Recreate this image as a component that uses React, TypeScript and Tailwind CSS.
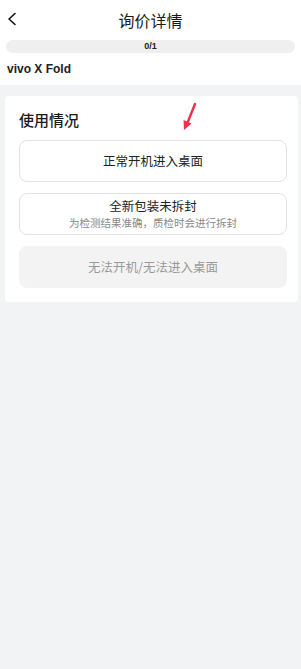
import React from "react";

export default function App() {
  const font = { fontFamily: '"Noto Sans CJK SC", "Noto Sans", sans-serif' };
  return (
    <div className="w-[301px] min-h-[669px] bg-[#f2f3f5] relative" style={font}>
      <div className="bg-white">
        <div className="relative h-[40px] flex items-center justify-center">
          <svg className="absolute left-[7px] top-[12px]" width="10" height="14" viewBox="0 0 10 14">
            <path d="M8 1.5 L2 7 L8 12.5" stroke="#111" strokeWidth="1.6" fill="none" strokeLinecap="round" strokeLinejoin="round" />
          </svg>
          <span className="text-[16px] text-[#1a1a1a]">询价详情</span>
        </div>
        <div className="px-[6px]">
          <div className="h-[13px] rounded-full bg-[#efefef] flex items-center justify-center">
            <span className="text-[9px] font-bold text-[#222] leading-none" style={{ fontFamily: '"Liberation Sans", sans-serif' }}>0/1</span>
          </div>
        </div>
        <div className="px-[7px] h-[32px] flex items-center">
          <span className="text-[12px] font-bold text-[#222]" style={{ fontFamily: '"Liberation Sans", "Noto Sans", sans-serif' }}>vivo X Fold</span>
        </div>
      </div>
      <div className="pl-[5px] pr-[3px] pt-[11px]">
        <div className="bg-white rounded-[4px] pl-[14px] pr-[11px] pt-[13px] pb-[14px]">
          <div className="text-[15px] font-medium text-[#1a1a1a] leading-[22px] mb-[9px]">使用情况</div>
          <div className="flex flex-col gap-[11px]">
            <div className="h-[42px] rounded-[8px] border border-[#e3e3e3] flex items-center justify-center">
              <span className="text-[12.5px] text-[#222]">正常开机进入桌面</span>
            </div>
            <div className="h-[42px] rounded-[8px] border border-[#e3e3e3] flex flex-col items-center justify-center">
              <span className="text-[12.5px] text-[#222] leading-[18px]">全新包装未拆封</span>
              <span className="text-[10.5px] text-[#888] leading-[16px]">为检测结果准确，质检时会进行拆封</span>
            </div>
            <div className="h-[42px] rounded-[8px] bg-[#f3f3f3] flex items-center justify-center">
              <span className="text-[12.5px] text-[#999]">无法开机/无法进入桌面</span>
            </div>
          </div>
        </div>
      </div>
      <svg className="absolute left-[180px] top-[102px]" width="20" height="30" viewBox="0 0 20 30">
        <path d="M15 2 L7 22" stroke="#ef2f4b" strokeWidth="2.4" strokeLinecap="round" />
        <path d="M3.5 18 L4 28 L11.5 21.5 Z" fill="#ef2f4b" />
      </svg>
    </div>
  );
}
